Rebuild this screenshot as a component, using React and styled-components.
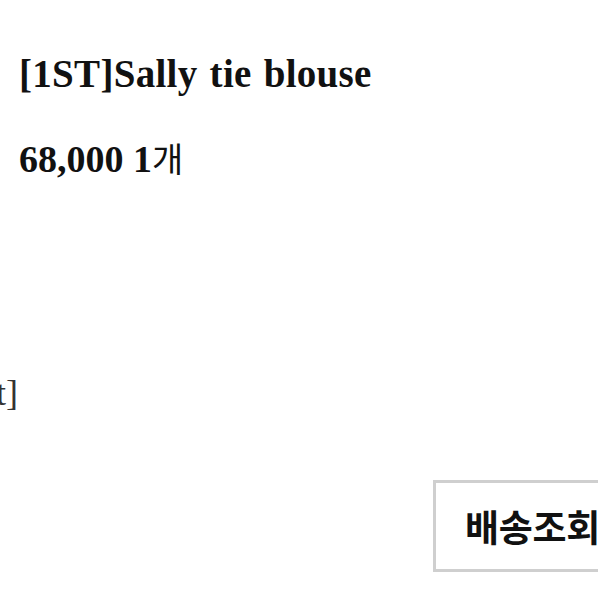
import React from 'react';
import styled, { createGlobalStyle } from "styled-components";

const GlobalStyle = createGlobalStyle`
  html, body {
    margin: 0;
    padding: 0;
    background: #fff;
  }
`;

const Page = styled.div`
  width: 598px;
  height: 598px;
  overflow: hidden;
  background: #fff;
  font-family: "Liberation Serif", "Noto Sans CJK KR", serif;
  color: #111;
`;

const ItemInfo = styled.div`
  padding: 52px 0 0 19px;
`;

const ItemName = styled.h2`
  margin: 0;
  font-size: 39px;
  line-height: 44px;
  font-weight: 700;
  letter-spacing: 0.3px;
  word-spacing: 2px;
`;

const ItemPrice = styled.p`
  margin: 42px 0 0;
  font-size: 38px;
  line-height: 40px;
  font-weight: 700;
`;

// 수량 표기는 고딕체로
const Qty = styled.span`
  font-family: "Noto Sans CJK KR", sans-serif;
  font-weight: 400;
  font-size: 34px;
`;

const OptionText = styled.div`
  margin: 194px 0 0 -52px;
  font-size: 36px;
  line-height: 40px;
  color: #333;
  white-space: nowrap;
`;

const ButtonRow = styled.div`
  display: flex;
  justify-content: flex-end;
  margin-top: 67px;
`;

const TrackButton = styled.button`
  margin-right: -60px;
  width: 225px;
  height: 92px;
  padding: 0 0 0 29px;
  text-align: left;
  white-space: nowrap;
  background: #fff;
  border: 3px solid #cfcfcf;
  font-family: "Noto Sans CJK KR", sans-serif;
  font-size: 37px;
  font-weight: 700;
  color: #111;
  letter-spacing: -0.3px;
`;

const App = () => {
  return (
    <React.Fragment>
      <GlobalStyle />
      <Page>
        <ItemInfo>
          <ItemName>[1ST]Sally tie blouse</ItemName>
          <ItemPrice>68,000 1<Qty>개</Qty></ItemPrice>
        </ItemInfo>
        <OptionText>[Set]</OptionText>
        <ButtonRow>
          <TrackButton>배송조회</TrackButton>
        </ButtonRow>
      </Page>
    </React.Fragment>
  );
};

export default App;
